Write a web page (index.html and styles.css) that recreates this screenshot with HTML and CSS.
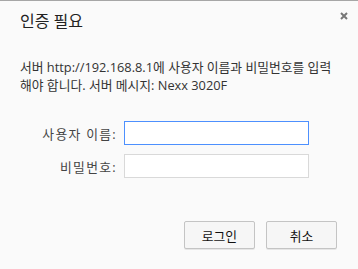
FILE: index.html
```html
<!DOCTYPE html>
<html lang="ko">
<head>
<meta charset="utf-8">
<link rel="stylesheet" href="styles.css">
</head>
<body>
<div class="dialog">
  <div class="header">
    <h1 class="title">인증 필요</h1>
    <button class="close" aria-label="닫기">
      <svg width="8" height="8" viewBox="0 0 8 8"><path d="M1 1L7 7M7 1L1 7" stroke="#777" stroke-width="2"/></svg>
    </button>
  </div>
  <p class="message">서버 http://192.168.8.1에 사용자 이름과 비밀번호를 입력해야 합니다. 서버 메시지: Nexx 3020F</p>
  <div class="form">
    <label class="label">사용자 이름:</label>
    <input class="field focused" type="text">
    <label class="label">비밀번호:</label>
    <input class="field" type="password">
  </div>
  <div class="actions">
    <button class="btn">로그인</button>
    <button class="btn">취소</button>
  </div>
</div>
</body>
</html>
```
FILE: styles.css
```css
html, body {
  margin: 0;
  padding: 0;
  background: #fafafa;
}
body {
  width: 358px;
  height: 269px;
  overflow: hidden;
  font-family: "Open Sans", "Noto Sans CJK KR", sans-serif;
  color: #333;
}
.dialog {
  box-sizing: border-box;
  height: 269px;
  border-top: 1px solid #a6a6a6;
  padding: 0 20px;
}
.header {
  display: flex;
  justify-content: space-between;
  align-items: flex-start;
  padding-top: 9px;
}
.title {
  margin: 0;
  font-size: 16px;
  font-weight: normal;
  line-height: 22px;
  color: #222;
}
.close {
  margin: 2px -10px 0 0;
  padding: 0;
  border: 0;
  background: none;
  width: 8px;
  height: 8px;
  display: flex;
}
.message {
  margin: 26px 0 0;
  font-size: 12.8px;
  line-height: 18px;
  color: #333;
}
.form {
  display: grid;
  grid-template-columns: 97px 185px;
  column-gap: 7px;
  row-gap: 9px;
  align-items: center;
  margin-top: 27px;
}
.label {
  text-align: right;
  font-size: 12.8px;
  letter-spacing: 1.3px;
  color: #444;
}
.field {
  box-sizing: border-box;
  height: 24px;
  width: 185px;
  margin: 0;
  border: 1px solid #d9d9d9;
  background: #fff;
  outline: none;
}
.field.focused {
  border-color: #4d90fe;
}
.actions {
  display: flex;
  justify-content: flex-end;
  gap: 11px;
  margin-top: 43px;
  margin-right: 1px;
}
.btn {
  box-sizing: border-box;
  width: 71px;
  height: 28px;
  border: 1px solid #c4c4c4;
  border-radius: 2px;
  background: #f6f6f6;
  box-shadow: 0 1px 0 rgba(0,0,0,0.08);
  font-family: "Open Sans", "Noto Sans CJK KR", sans-serif;
  font-size: 12.8px;
  color: #111;
  padding: 0;
}
```
